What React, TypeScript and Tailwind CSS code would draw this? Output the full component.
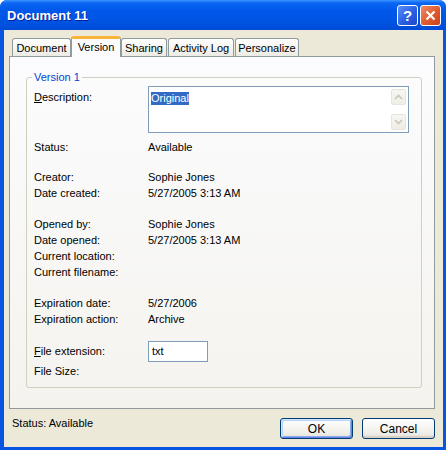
import React from 'react';

const tabs = ['Document', 'Version', 'Sharing', 'Activity Log', 'Personalize'];
const tabWidths: Record<string, string> = {
  Document: 'w-[59px]',
  Version: 'w-[50px]',
  Sharing: 'w-[46px]',
  'Activity Log': 'w-[66px] ml-[1px]',
  Personalize: 'w-[64px] ml-[1px]',
};

const Row = ({ label, value, className = '' }: { label: React.ReactNode; value?: string; className?: string }) => (
  <div className={`flex h-[16px] leading-[16px] ${className}`}>
    <span className="w-[114px] shrink-0">{label}</span>
    <span>{value}</span>
  </div>
);

const ScrollArrow = ({ down }: { down?: boolean }) => (
  <div className="w-[15px] h-[16px] rounded-[2px] border border-[#e6e4dc] bg-[linear-gradient(to_bottom,#f7f6f2,#eeede6)] flex items-center justify-center">
    <svg width="9" height="6" viewBox="0 0 9 6" className={down ? 'rotate-180' : ''}>
      <path d="M1 5 L4.5 1.5 L8 5" fill="none" stroke="#c9c7ba" strokeWidth="1.6" />
    </svg>
  </div>
);

export default function App() {
  return (
    <div className="w-[446px] h-[450px] flex flex-col rounded-t-[7px] overflow-hidden bg-[#0855e2] text-[11px] text-black font-['Liberation_Sans',Arial,sans-serif]">
      {/* Title bar */}
      <div className="h-[30px] shrink-0 flex items-center pl-[7px] pr-[5px] bg-[linear-gradient(to_bottom,#3d95ff_0%,#0a66f2_10%,#0058ea_35%,#0054e3_70%,#004bd6_100%)]">
        <span className="flex-1 text-white font-bold text-[13px] pt-[1px] [text-shadow:1px_1px_0_#0a1e9c]">Document 11</span>
        <div className="flex gap-[2px]">
          <div className="w-[21px] h-[21px] rounded-[3px] border border-white bg-[linear-gradient(135deg,#5c8ff5,#2a5fe2_55%,#1c49c8)] flex items-center justify-center text-white font-bold text-[15px] leading-none">?</div>
          <div className="w-[21px] h-[21px] rounded-[3px] border border-white bg-[linear-gradient(135deg,#ee8a68,#df5a2c_55%,#c8421d)] flex items-center justify-center">
            <svg width="11" height="11" viewBox="0 0 11 11">
              <path d="M1.5 1.5 L9.5 9.5 M9.5 1.5 L1.5 9.5" stroke="white" strokeWidth="2.2" />
            </svg>
          </div>
        </div>
      </div>

      {/* Dialog body */}
      <div className="flex-1 ml-[4px] mr-[3px] mb-[3px] bg-[#ece9d8] pt-[6px] px-[5px] flex flex-col">
        {/* Tabs */}
        <div className="flex items-end h-[20px] pl-[3px]">
          {tabs.map(t =>
            t === 'Version' ? (
              <div
                key={t}
                className={`${tabWidths[t]} relative z-10 -mb-px h-[21px] rounded-t-[3px] border-x border-[#919b9c] border-t-[3px] border-t-[#f8b33b] bg-[#fcfcfe] flex justify-center pt-[1px] leading-[14px]`}
              >
                {t}
              </div>
            ) : (
              <div
                key={t}
                className={`${tabWidths[t]} h-[18px] rounded-t-[3px] border-x border-t border-[#919b9c] bg-[linear-gradient(to_bottom,#ffffff,#ecebe5)] flex justify-center pt-[2px] leading-[14px]`}
              >
                {t}
              </div>
            )
          )}
        </div>

        {/* Tab panel */}
        <div className="w-[426px] h-[353px] border border-[#919b9c] bg-[linear-gradient(to_bottom,#fcfcfe,#f4f3ee)] pt-[20px] pl-[16px]">
          <div className="relative w-[396px] h-[311px] rounded-[3px] border border-[#d0d0bf] pt-[8px] pl-[7px] flex flex-col">
            <span className="absolute left-[5px] -top-[8px] px-[2px] bg-[#fcfcfe] text-[#0046d5] leading-[14px]">Version 1</span>

            <div className="flex h-[47px]">
              <span className="w-[114px] shrink-0 pt-[3px] leading-[16px]">
                <u>D</u>escription:
              </span>
              <div className="w-[261px] h-[47px] border border-[#7f9db9] bg-white flex">
                <div className="flex-1 pl-[2px] pt-[3px]">
                  <span className="bg-[#316ac5] text-white leading-[13px] inline-block">Original</span>
                </div>
                <div className="w-[15px] mr-[2px] my-[2px] flex flex-col justify-between">
                  <ScrollArrow />
                  <ScrollArrow down />
                </div>
              </div>
            </div>

            <Row label="Status:" value="Available" className="mt-[6px]" />

            <Row label="Creator:" value="Sophie Jones" className="mt-[14px]" />
            <Row label="Date created:" value="5/27/2005 3:13 AM" />

            <Row label="Opened by:" value="Sophie Jones" className="mt-[15px]" />
            <Row label="Date opened:" value="5/27/2005 3:13 AM" />
            <Row label="Current location:" />
            <Row label="Current filename:" />

            <Row label="Expiration date:" value="5/27/2006" className="mt-[15px]" />
            <Row label="Expiration action:" value="Archive" />

            <div className="flex items-center h-[21px] mt-[14px]">
              <span className="w-[114px] shrink-0">
                <u>F</u>ile extension:
              </span>
              <div className="w-[60px] h-[21px] border border-[#7f9db9] bg-white pl-[3px] leading-[19px]">txt</div>
            </div>
            <Row label="File Size:" className="mt-[1px]" />
          </div>
        </div>

        {/* Bottom bar */}
        <div className="w-[426px] mt-[9px] h-[21px] flex items-start">
          <span className="flex-1 pl-[3px] leading-[16px] -mt-[3px]">Status: Available</span>
          <button className="w-[73px] h-[21px] rounded-[3px] border border-[#003c74] bg-[linear-gradient(to_bottom,#ffffff,#f0efea_70%,#e3e1d8)] shadow-[inset_1px_1px_0_#cee7ff,inset_-1px_-1px_0_#6982ee,inset_2px_2px_0_#bcd4f6,inset_-2px_-2px_0_#89ade4] text-[12px] leading-none">
            OK
          </button>
          <button className="ml-[9px] w-[73px] h-[21px] rounded-[3px] border border-[#003c74] bg-[linear-gradient(to_bottom,#ffffff,#f0efea_70%,#e3e1d8)] shadow-[inset_0_-2px_0_#d8d2c6] text-[12px] leading-none">
            Cancel
          </button>
        </div>
      </div>
    </div>
  );
}
